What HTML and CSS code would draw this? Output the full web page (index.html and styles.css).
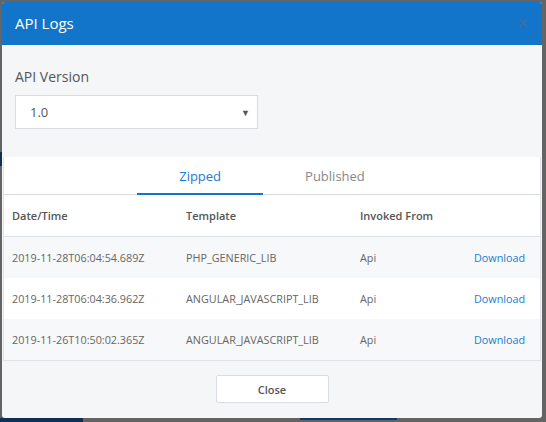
FILE: index.html
```html
<!DOCTYPE html>
<html>
<head>
<meta charset="utf-8">
<link rel="stylesheet" href="styles.css">
</head>
<body>
<div class="backdrop">
  <div class="bg-bit bit-left"></div>
  <div class="bg-bit bit-bottom1"></div>
  <div class="bg-bit bit-bottom2"></div>
</div>
<div class="modal">
  <div class="modal-header">
    <span class="modal-title">API Logs</span>
    <span class="modal-close">×</span>
  </div>
  <div class="modal-body">
    <label class="field-label">API Version</label>
    <div class="select">
      <span>1.0</span>
      <span class="caret">▼</span>
    </div>
  </div>
  <div class="panel">
    <div class="tabs">
      <div class="tab active">Zipped</div>
      <div class="tab">Published</div>
    </div>
    <div class="table">
      <div class="row head">
        <div class="cell c1">Date/Time</div>
        <div class="cell c2">Template</div>
        <div class="cell c3">Invoked From</div>
        <div class="cell c4"></div>
      </div>
      <div class="row alt">
        <div class="cell c1">2019-11-28T06:04:54.689Z</div>
        <div class="cell c2">PHP_GENERIC_LIB</div>
        <div class="cell c3">Api</div>
        <div class="cell c4"><a class="link">Download</a></div>
      </div>
      <div class="row">
        <div class="cell c1">2019-11-28T06:04:36.962Z</div>
        <div class="cell c2">ANGULAR_JAVASCRIPT_LIB</div>
        <div class="cell c3">Api</div>
        <div class="cell c4"><a class="link">Download</a></div>
      </div>
      <div class="row alt">
        <div class="cell c1">2019-11-26T10:50:02.365Z</div>
        <div class="cell c2">ANGULAR_JAVASCRIPT_LIB</div>
        <div class="cell c3">Api</div>
        <div class="cell c4"><a class="link">Download</a></div>
      </div>
    </div>
  </div>
  <div class="modal-footer">
    <button class="btn">Close</button>
  </div>
</div>
</body>
</html>
```

FILE: styles.css
```css
html, body {
  margin: 0;
  padding: 0;
}
body {
  width: 546px;
  height: 422px;
  background: #646464;
  font-family: "Open Sans", "Noto Sans", sans-serif;
  padding: 2px;
  box-sizing: border-box;
  overflow: hidden;
  position: relative;
}
.backdrop {
  position: absolute;
  inset: 0;
}
.bg-bit {
  position: absolute;
  background: #0f2f55;
}
.bit-left { left: 0; top: 152px; width: 2px; height: 14px; }
.bit-bottom1 { left: 0; top: 418px; width: 83px; height: 4px; }
.bit-bottom2 { left: 300px; top: 418px; width: 97px; height: 2px; background: #123a66; }

.modal {
  position: relative;
  width: 540px;
  height: 416px;
  background: #f4f6f8;
  border-radius: 3px;
  overflow: hidden;
  display: flex;
  flex-direction: column;
}
.modal-header {
  height: 43px;
  background: #1275c9;
  display: flex;
  align-items: center;
  justify-content: space-between;
  padding: 0 14px 0 13px;
  flex-shrink: 0;
}
.modal-title {
  color: #ffffff;
  font-size: 15px;
  margin-top: -1px;
}
.modal-close {
  color: #3f6ea3;
  font-size: 19px;
  line-height: 1;
  font-weight: 600;
}
.modal-body {
  padding: 22px 13px 0;
  height: 90px;
  flex-shrink: 0;
}
.field-label {
  display: block;
  font-size: 14px;
  line-height: 20px;
  color: #555;
  margin-bottom: 8px;
}
.select {
  width: 243px;
  height: 34px;
  box-sizing: border-box;
  background: #fff;
  border: 1px solid #d9dce0;
  display: flex;
  align-items: center;
  justify-content: space-between;
  padding: 0 6px 0 14px;
  font-size: 13px;
  color: #555;
}
.caret {
  font-size: 9px;
  color: #555;
  margin-right: 1px;
}
.panel {
  background: #fff;
  margin: 0 1px;
  border-left: 1px solid #dfe2e6;
  border-right: 1px solid #dfe2e6;
  border-bottom: 1px solid #dfe2e6;
  flex-shrink: 0;
}
.tabs {
  height: 37px;
  display: flex;
  justify-content: center;
  border-bottom: 1px solid #d9dde2;
}
.tab {
  padding: 0 42px;
  font-size: 13px;
  color: #888;
  display: flex;
  align-items: center;
  box-sizing: border-box;
  border-bottom: 2px solid transparent;
  margin-bottom: -1px;
  padding-top: 1px;
}
.tab.active {
  color: #1a7bd0;
  border-bottom-color: #1275c9;
}
.row {
  display: flex;
  height: 41px;
  align-items: center;
  font-size: 10.8px;
  color: #666;
}
.row.head {
  font-weight: 600;
  color: #555;
  font-size: 11px;
  height: 41px;
  border-bottom: 1px solid #dfe2e6;
}
.row.alt {
  background: #f7f8f9;
}
.cell {
  padding-left: 8px;
  box-sizing: border-box;
  white-space: nowrap;
}
.c1 { width: 174px; }
.c2 { width: 174px; }
.c3 { width: 114px; }
.c4 { flex: 1; }
.link {
  color: #1a7bd0;
  text-decoration: none;
}
.modal-footer {
  flex: 1;
  display: flex;
  justify-content: center;
  padding-top: 14px;
  box-sizing: border-box;
}
.btn {
  width: 113px;
  height: 28px;
  background: #fff;
  border: 1px solid #d9dce0;
  border-radius: 2px;
  font-family: "Open Sans", "Noto Sans", sans-serif;
  font-weight: 600;
  font-size: 11px;
  color: #555;
}
```
